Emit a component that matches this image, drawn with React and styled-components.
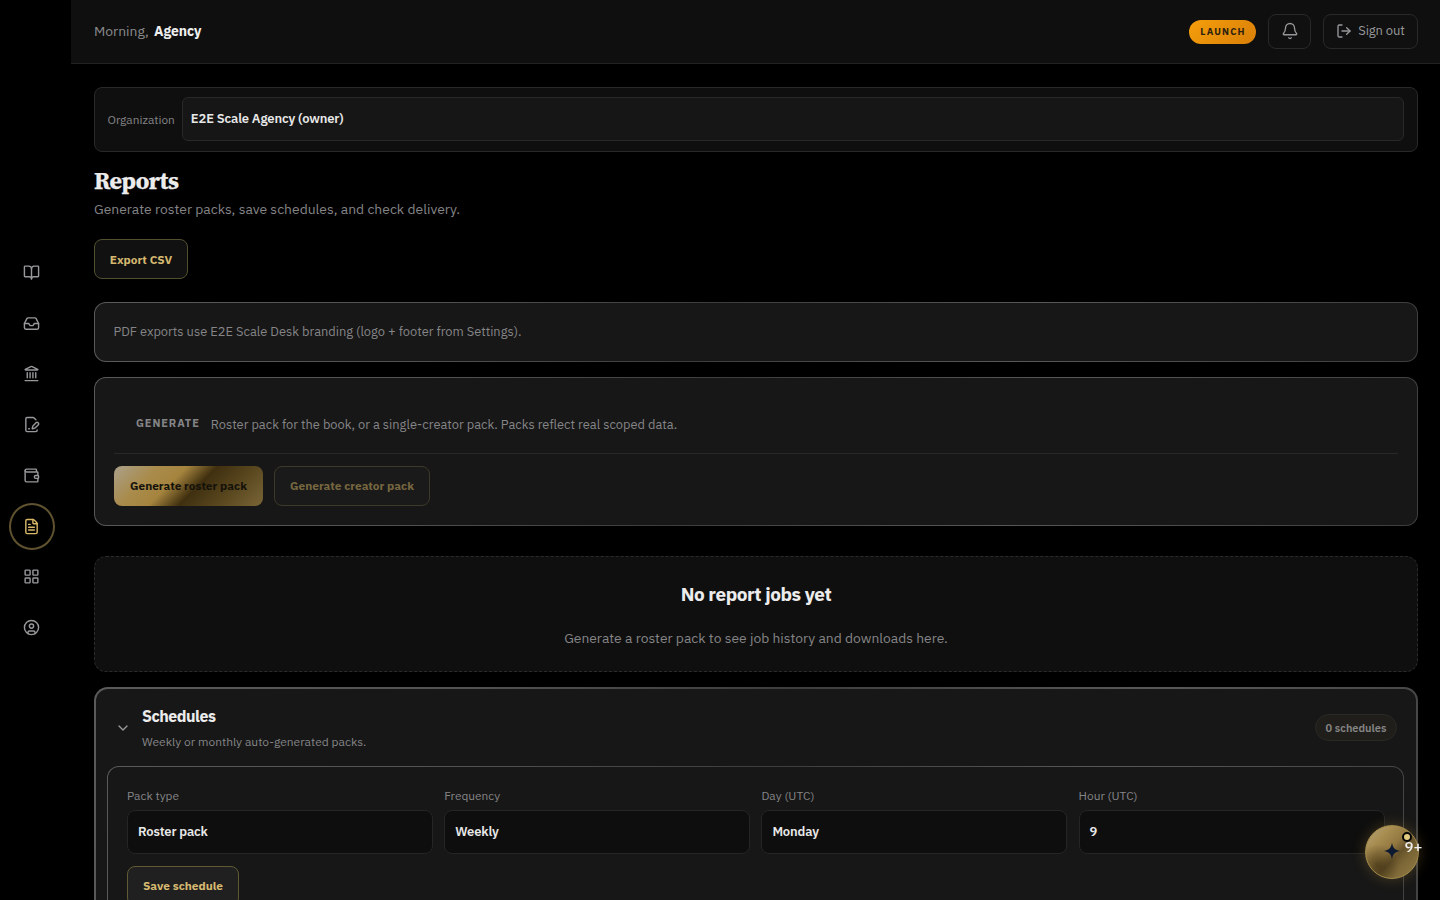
import React from 'react';
import styled, { createGlobalStyle, css } from 'styled-components';
import { BookOpen, Inbox, Landmark, FilePenLine, Wallet, FileText, LayoutGrid, CircleUser, Bell, LogOut, ChevronDown } from 'lucide-react';

const Global = createGlobalStyle`
  *, *::before, *::after { box-sizing: border-box; }
  html, body { margin: 0; height: 100%; background: #000; overflow: hidden; }
  body { font-family: "IBM Plex Sans", Roboto, "Liberation Sans", sans-serif; color: #e8e8e8; }
  h1, h2, h3, p { margin: 0; }
  button { font-family: inherit; }
`;

const Shell = styled.div`
  display: flex;
  height: 900px;
  overflow: hidden;
`;

const Rail = styled.nav`
  width: 71px;
  flex: none;
  display: flex;
  flex-direction: column;
  align-items: center;
  justify-content: center;
  gap: 4px;
  padding: 0 8px 0 0;
`;

const RailItem = styled.a`
  width: 46px;
  height: 46.75px;
  display: grid;
  place-items: center;
  padding-right: 1px;
  border-radius: 50%;
  border: 2px solid ${p => (p.$active ? '#5f522f' : 'transparent')};
  color: ${p => (p.$active ? '#d9b967' : '#98989b')};
`;

const Main = styled.div`
  flex: 1;
  min-width: 0;
  display: flex;
  flex-direction: column;
`;

const TopBar = styled.header`
  height: 64px;
  flex: none;
  display: flex;
  align-items: center;
  gap: 12px;
  padding: 0 22px 1px 23px;
  background: #0f0f0f;
  border-bottom: 1px solid #222;
`;

const Greeting = styled.div`
  flex: 1;
  font-size: 13.9px;
  color: #8b8b8d;
  strong { color: #efefef; font-weight: 700; letter-spacing: -0.05px; margin-left: 2px; }
`;

const LaunchTag = styled.span`
  height: 24px;
  width: 67px;
  margin-top: 2px;
  border-radius: 12px;
  display: grid;
  place-items: center;
  background: linear-gradient(135deg, #f59e0b, #d97f08);
  color: #2c2111;
  font-size: 9.6px;
  font-weight: 700;
  letter-spacing: 1.15px;
  padding: 0 0 1px 1px;
`;

const BarButton = styled.button`
  height: 35px;
  width: ${p => p.$w}px;
  display: flex;
  align-items: center;
  justify-content: center;
  gap: 6px;
  padding: 0;
  border: 1px solid #29292a;
  border-radius: 8px;
  background: #101010;
  color: #98989b;
  font-size: 13px;
  letter-spacing: -0.1px;
  span { margin-top: -2px; }
`;

const Content = styled.main`
  padding: 23px 22px 0 23px;
  display: flex;
  flex-direction: column;
`;

const OrgBar = styled.section`
  height: 65px;
  display: flex;
  align-items: center;
  gap: 7.5px;
  padding: 0 13px 1px 12.6px;
  background: #0f0f0f;
  border: 1px solid #29292a;
  border-radius: 8px;
  > span { margin-top: 2px; }
`;

const FieldLabel = styled.span`
  font-size: 11.9px;
  line-height: 16px;
  letter-spacing: 0;
  color: #858587;
`;

const Select = styled.div`
  height: 44px;
  flex: ${p => (p.$grow ? 1 : 'none')};
  display: flex;
  align-items: center;
  padding: 0 ${p => (p.$grow ? 7.5 : 10)}px 1px;
  border: 1px solid ${p => (p.$grow ? '#29292a' : '#252526')};
  border-radius: ${p => (p.$grow ? 6 : 8)}px;
  background: ${p => (p.$grow ? '#161616' : '#0e0e0e')};
  color: #e8e8e8;
  font-size: 13px;
  font-weight: 600;
  letter-spacing: -0.15px;
`;

const Title = styled.h1`
  margin-top: 13px;
  font-family: "Source Serif 4", "Liberation Serif", serif;
  font-size: 24px;
  line-height: 32px;
  font-weight: 700;
  letter-spacing: -0.45px;
  -webkit-text-stroke: 0.25px #ececec;
  color: #ececec;
`;

const Subtitle = styled.p`
  margin-top: 2px;
  font-size: 13.9px;
  line-height: 20px;
  color: #858587;
`;

const variants = {
  outline: css`
    padding-top: 1px;
    background: #111; border: 1px solid #53502f; color: #d6b970;
  `,
  primary: css`
    border: 0; color: #15120a;
    background:
      linear-gradient(135deg, #aaa08a 0%, #a98b4b 24%, #a5843e 39%, #403010 55%, #55431c 72%, #796536 100%);
  `,
  muted: css`
    background: #1a1a1a; border: 1px solid #3d3a29; color: #776740;
  `,
  raised: css`
    background: #202020; border: 1px solid #5f5a34; color: #d6b970;
  `,
};

const Button = styled.button`
  width: ${p => p.$w}px;
  height: 40px;
  flex: none;
  padding: 0 0 1px;
  border-radius: 8px;
  font-size: 11.85px;
  font-weight: 700;
  white-space: nowrap;
  ${p => variants[p.$variant]}
`;

const Card = styled.section`
  border: ${p => p.$bw || 1}px solid transparent;
  border-radius: ${p => p.$r || 12}px;
  background:
    linear-gradient(#171717, #171717) padding-box,
    linear-gradient(115deg, #5a5a5a 0%, #525252 25%, #3d3d3d 46%, #585858 70%, #3d3d3d 100%) border-box;
`;

const BrandNote = styled(Card)`
  height: 60px;
  margin-top: 23px;
  padding: 18px 18px 18px 18.4px;
  font-size: 12.85px;
  line-height: 21px;
  color: #858587;
`;

const GenerateCard = styled(Card)`
  height: 149px;
  margin-top: 15px;
  padding: 18px 19px;
`;

const GenerateHead = styled.div`
  height: 58px;
  padding: 20px 22px 0;
  display: flex;
  align-items: flex-start;
  gap: 11px;
  border-bottom: 1px solid #292929;
  h2 { font-size: 11px; line-height: 14px; letter-spacing: 0.9px; color: #858587; font-weight: 700; }
  p { font-size: 12.85px; line-height: 17px; color: #858587; }
`;

const ButtonRow = styled.div`
  display: flex;
  gap: 11px;
  margin-top: ${p => p.$top || 12}px;
`;

const EmptyState = styled.section`
  height: 116px;
  margin-top: 30px;
  padding-top: 24px;
  border: 1px dashed #2b2b2b;
  border-radius: 12px;
  background: #0f0f0f;
  text-align: center;
  h2 { font-size: 19px; line-height: 26px; font-weight: 700; letter-spacing: -0.45px; color: #ececec; }
  p { margin-top: 21px; font-size: 13.87px; line-height: 20px; color: #858587; }
`;

const Schedules = styled(Card)`
  height: 400px;
  margin-top: 15px;
  padding: 16px 12px 0 11px;
`;

const ScheduleHead = styled.div`
  display: flex;
  align-items: center;
  height: 45px;
  padding: 0 7px 0 8px;
  > svg { color: #9a9a9a; }
`;

const ScheduleTitles = styled.div`
  flex: 1;
  margin-left: 11px;
  h2 { margin-top: -1px; font-size: 16px; line-height: 22px; font-weight: 700; letter-spacing: -0.5px; color: #ececec; }
  p { margin-top: 7px; font-size: 12px; line-height: 16px; letter-spacing: 0; color: #858587; }
`;

const CountPill = styled.span`
  width: 82px;
  height: 27px;
  display: grid;
  place-items: center;
  border: 1px solid #2a2924;
  border-radius: 14px;
  background: #1f1e1a;
  color: #858585;
  font-size: 11px;
  font-weight: 600;
  letter-spacing: 0;
`;

const FormCard = styled(Card)`
  height: 300px;
  margin-top: 16px;
  padding: 21px 19px;
`;

const Fields = styled.div`
  display: grid;
  grid-template-columns: repeat(4, 306px);
  gap: 11.2px;
  margin-bottom: 12px;
`;

const Field = styled.div`
  display: flex;
  flex-direction: column;
  gap: 6px;
`;

const Assistant = styled.button`
  position: fixed;
  left: 1365px;
  top: 825px;
  width: 54px;
  height: 54px;
  padding: 0;
  border-radius: 50%;
  border: 1px solid #a48b4c;
  background:
    radial-gradient(circle at 22% 76%, rgba(50, 38, 12, 0.6) 0, rgba(50, 38, 12, 0) 38%),
    linear-gradient(135deg, #b3a27c 0%, #a98e52 25%, #927740 45%, #66522a 58%, #7a6535 70%, #967f48 100%);
  box-shadow: 0 0 14px rgba(190, 150, 60, 0.3);
  svg { display: block; margin: -2px auto 0; }
`;

const StatusDot = styled.i`
  position: absolute;
  right: 6px;
  top: 6px;
  width: 10px;
  height: 10px;
  border-radius: 50%;
  border: 2.5px solid #050505;
  background: #e3cb82;
`;

const Unread = styled.span`
  position: absolute;
  left: 38.5px;
  top: 12px;
  font-size: 15px;
  font-weight: 500;
  line-height: 18px;
  color: #f0f0f0;
`;

const NAV = [BookOpen, Inbox, Landmark, FilePenLine, Wallet, FileText, LayoutGrid, CircleUser];
const FIELDS = [['Pack type', 'Roster pack'], ['Frequency', 'Weekly'], ['Day (UTC)', 'Monday'], ['Hour (UTC)', '9']];

export default function App() {
  return (
    <Shell>
      <Global />
      <Rail>
        {NAV.map((Icon, i) => (
          <RailItem key={i} $active={i === 5}><Icon size={17} strokeWidth={2} /></RailItem>
        ))}
      </Rail>
      <Main>
        <TopBar>
          <Greeting>Morning, <strong>Agency</strong></Greeting>
          <LaunchTag>LAUNCH</LaunchTag>
          <BarButton $w={43}><Bell size={18} strokeWidth={1.75} /></BarButton>
          <BarButton $w={95}><LogOut size={16} strokeWidth={2} /><span>Sign out</span></BarButton>
        </TopBar>
        <Content>
          <OrgBar>
            <FieldLabel>Organization</FieldLabel>
            <Select $grow>E2E Scale Agency (owner)</Select>
          </OrgBar>
          <Title>Reports</Title>
          <Subtitle>Generate roster packs, save schedules, and check delivery.</Subtitle>
          <ButtonRow $top={20}>
            <Button $variant="outline" $w={94}>Export CSV</Button>
          </ButtonRow>
          <BrandNote>PDF exports use E2E Scale Desk branding (logo + footer from Settings).</BrandNote>
          <GenerateCard>
            <GenerateHead>
              <h2>GENERATE</h2>
              <p>Roster pack for the book, or a single-creator pack. Packs reflect real scoped data.</p>
            </GenerateHead>
            <ButtonRow>
              <Button $variant="primary" $w={149}>Generate roster pack</Button>
              <Button $variant="muted" $w={156}>Generate creator pack</Button>
            </ButtonRow>
          </GenerateCard>
          <EmptyState>
            <h2>No report jobs yet</h2>
            <p>Generate a roster pack to see job history and downloads here.</p>
          </EmptyState>
          <Schedules $bw={2} $r={14}>
            <ScheduleHead>
              <ChevronDown size={16} strokeWidth={2} />
              <ScheduleTitles>
                <h2>Schedules</h2>
                <p>Weekly or monthly auto-generated packs.</p>
              </ScheduleTitles>
              <CountPill>0 schedules</CountPill>
            </ScheduleHead>
            <FormCard>
              <Fields>
                {FIELDS.map(([label, value]) => (
                  <Field key={label}>
                    <FieldLabel>{label}</FieldLabel>
                    <Select>{value}</Select>
                  </Field>
                ))}
              </Fields>
              <Button $variant="raised" $w={112}>Save schedule</Button>
            </FormCard>
          </Schedules>
        </Content>
      </Main>
      <Assistant>
        <svg width="18" height="18" viewBox="0 0 18 18"><path d="M9 0.5C9.8 6 12 8.2 17.5 9C12 9.8 9.8 12 9 17.5C8.2 12 6 9.8 0.5 9C6 8.2 8.2 6 9 0.5Z" fill="#0d1930" /></svg>
        <StatusDot />
        <Unread>9+</Unread>
      </Assistant>
    </Shell>
  );
}
